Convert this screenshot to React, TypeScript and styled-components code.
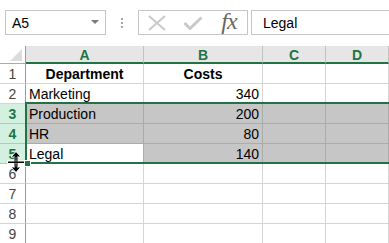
import React from 'react';
import styled, { createGlobalStyle } from 'styled-components';

const GREEN = '#217346';

const GlobalStyle = createGlobalStyle`
  html, body {
    margin: 0;
    padding: 0;
    background: #fff;
  }
  body {
    font-family: "Liberation Sans", Arial, sans-serif;
    overflow: hidden;
  }
`;

const Page = styled.div`
  width: 389px;
  height: 243px;
  overflow: hidden;
  background: #fff;
`;

const FormulaBar = styled.div`
  display: flex;
  align-items: stretch;
  height: 25px;
  margin-top: 10px;
  padding-left: 5px;
`;

const NameBox = styled.div`
  box-sizing: border-box;
  width: 101px;
  border: 1px solid #c6c6c6;
  display: flex;
  align-items: center;
  justify-content: space-between;
  padding: 1px 6px 0 6px;
  font-size: 14px;
  color: #000;
`;

const DropArrow = styled.span`
  width: 0;
  height: 0;
  border-left: 4px solid transparent;
  border-right: 4px solid transparent;
  border-top: 4px solid #7a7a7a;
  margin-top: -2px;
`;

const Grip = styled.div`
  width: 31px;
  display: flex;
  flex-direction: column;
  align-items: center;
  justify-content: center;
  gap: 2px;
  padding-right: 1px;
`;

const GripDot = styled.span`
  width: 2px;
  height: 2px;
  background: #a6a6a6;
`;

const FxBox = styled.div`
  box-sizing: border-box;
  width: 110px;
  border: 1px solid #c6c6c6;
  display: flex;
`;

const FxButton = styled.div`
  width: 36px;
  display: flex;
  align-items: center;
  justify-content: center;
`;

const FxLabel = styled.span`
  font-family: "Liberation Serif", "DejaVu Serif", serif;
  font-style: italic;
  font-size: 24px;
  color: #666;
  letter-spacing: -1px;
  margin-top: -3px;
`;

const FormulaInput = styled.div`
  flex: 1;
  margin-left: 3px;
  border: 1px solid #c6c6c6;
  border-right: none;
  display: flex;
  align-items: center;
  padding: 1px 0 0 11px;
  font-size: 14px;
  color: #000;
`;

const Sheet = styled.div`
  position: relative;
  margin-top: 11px;
  display: grid;
  grid-template-columns: 26px 118px 119px 63px 1fr;
  grid-template-rows: 18px repeat(9, 20px);
`;

const Corner = styled.div`
  box-sizing: border-box;
  position: relative;
  background: #fff;
  border-right: 1px solid #9b9b9b;
  border-bottom: 1px solid #ababab;

  &::after {
    content: '';
    position: absolute;
    right: 3px;
    bottom: 2px;
    width: 0;
    height: 0;
    border-left: 12px solid transparent;
    border-bottom: 12px solid #dcdcdc;
  }
`;

const ColHead = styled.div`
  box-sizing: border-box;
  background: #e6e6e6;
  border-right: 1px solid #c2c2c2;
  border-bottom: 2px solid ${GREEN};
  display: flex;
  align-items: center;
  justify-content: center;
  font-size: 14px;
  font-weight: bold;
  color: ${GREEN};
  padding-top: 1px;
`;

const RowHead = styled.div<{ $selected?: boolean }>`
  box-sizing: border-box;
  background: ${(p) => (p.$selected ? '#d3f0e0' : '#fff')};
  border-right: 1px solid #9b9b9b;
  border-bottom: 1px solid ${(p) => (p.$selected ? '#9fd5b7' : '#d4d4d4')};
  display: flex;
  align-items: flex-end;
  justify-content: center;
  padding-bottom: 1px;
  line-height: 16px;
  font-size: 14px;
  font-weight: ${(p) => (p.$selected ? 'bold' : 'normal')};
  color: ${(p) => (p.$selected ? GREEN : '#444')};
`;

const Cell = styled.div<{ $selected?: boolean; $active?: boolean; $align?: string; $bold?: boolean }>`
  box-sizing: border-box;
  background: ${(p) => (p.$selected && !p.$active ? '#c6c6c6' : '#fff')};
  border-right: 1px solid ${(p) => (p.$selected ? '#ababab' : '#d4d4d4')};
  border-bottom: 1px solid ${(p) => (p.$selected ? '#ababab' : '#d4d4d4')};
  display: flex;
  align-items: flex-end;
  justify-content: ${(p) => p.$align || 'flex-start'};
  padding: 0 3px 1px 3px;
  line-height: 16px;
  font-size: 14px;
  font-weight: ${(p) => (p.$bold ? 'bold' : 'normal')};
  color: #000;
  white-space: nowrap;
`;

const Selection = styled.div`
  position: absolute;
  left: 25px;
  right: -10px;
  top: 56px;
  height: 62px;
  box-sizing: border-box;
  border: 2px solid ${GREEN};
  pointer-events: none;
`;

const FillHandle = styled.div`
  position: absolute;
  left: 24px;
  top: 114px;
  width: 7px;
  height: 7px;
  box-sizing: border-box;
  background: ${GREEN};
  border: 1px solid #fff;
`;

const Cursor = styled.svg`
  position: absolute;
  left: 4px;
  top: 105px;
`;

type Row = { a?: string; b?: string; head?: boolean };

const rows: Row[] = [
  { a: 'Department', b: 'Costs', head: true },
  { a: 'Marketing', b: '340' },
  { a: 'Production', b: '200' },
  { a: 'HR', b: '80' },
  { a: 'Legal', b: '140' },
  {},
  {},
  {},
  {},
];

const selectedRows = [3, 4, 5];
const activeRow = 5;

export default function App() {
  return (
    <Page>
      <GlobalStyle />
      <FormulaBar>
        <NameBox>
          <span>A5</span>
          <DropArrow />
        </NameBox>
        <Grip>
          <GripDot />
          <GripDot />
          <GripDot />
        </Grip>
        <FxBox>
          <FxButton>
            <svg width="20" height="16" viewBox="0 0 20 16">
              <path d="M2 1 L18 15 M18 1 L2 15" stroke="#c9c9c9" strokeWidth="2" fill="none" />
            </svg>
          </FxButton>
          <FxButton>
            <svg width="20" height="14" viewBox="0 0 20 14">
              <path d="M1.5 7 L7 12.5 L18.5 1.5" stroke="#c9c9c9" strokeWidth="3" fill="none" />
            </svg>
          </FxButton>
          <FxButton>
            <FxLabel>fx</FxLabel>
          </FxButton>
        </FxBox>
        <FormulaInput>Legal</FormulaInput>
      </FormulaBar>

      <Sheet>
        <Corner />
        {['A', 'B', 'C', 'D'].map((c) => (
          <ColHead key={c}>{c}</ColHead>
        ))}
        {rows.map((r, i) => {
          const n = i + 1;
          const sel = selectedRows.includes(n);
          return (
            <React.Fragment key={n}>
              <RowHead $selected={sel}>{n}</RowHead>
              <Cell $selected={sel} $active={n === activeRow} $bold={r.head} $align={r.head ? 'center' : 'flex-start'}>
                {r.a}
              </Cell>
              <Cell $selected={sel} $bold={r.head} $align={r.head ? 'center' : 'flex-end'}>
                {r.b}
              </Cell>
              <Cell $selected={sel} />
              <Cell $selected={sel} />
            </React.Fragment>
          );
        })}
        <Selection />
        <FillHandle />
        <Cursor width="22" height="22" viewBox="0 0 22 22">
          <g stroke="#fff" strokeWidth="1">
            <path d="M12 0.5 L7 6 L11 6 L11 16 L7 16 L12 21.5 L17 16 L13 16 L13 6 L17 6 Z" fill="#000" />
            <rect x="3.5" y="10" width="17" height="2.5" fill="#000" />
          </g>
          <path d="M11 6 L11 16 M13 6 L13 16" stroke="#000" strokeWidth="1" />
        </Cursor>
      </Sheet>
    </Page>
  );
}
